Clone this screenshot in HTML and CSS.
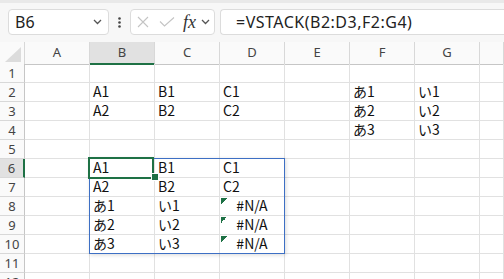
FILE: index.html
```html
<!DOCTYPE html>
<html lang="ja">
<head>
  <meta charset="UTF-8">
  <title>VSTACK</title>
  <link rel="stylesheet" href="styles.css">
</head>
<body>
  <div class="toolbar">
    <div class="namebox">
      <span>B6</span>
      <svg class="chev" width="9" height="6" viewBox="0 0 9 6"><polyline points="1,1 4.5,4.5 8,1" fill="none" stroke="#555" stroke-width="1.3"/></svg>
    </div>
    <div class="dots">
      <svg width="3" height="11" viewBox="0 0 3 11"><circle cx="1.5" cy="1.5" r="1.3" fill="#444"/><circle cx="1.5" cy="5.5" r="1.3" fill="#444"/><circle cx="1.5" cy="9.5" r="1.3" fill="#444"/></svg>
    </div>
    <div class="fbuttons">
      <svg class="cancel" width="12" height="12" viewBox="0 0 12 12"><path d="M1 1L11 11M11 1L1 11" stroke="#c4c4c4" stroke-width="1.1" fill="none"/></svg>
      <svg class="enter" width="16" height="10" viewBox="0 0 16 10"><polyline points="1,4.5 5.5,9 15,0.5" fill="none" stroke="#c4c4c4" stroke-width="1.1"/></svg>
      <span class="fx">fx</span>
      <svg class="chev" width="9" height="6" viewBox="0 0 9 6"><polyline points="1,1 4.5,4.5 8,1" fill="none" stroke="#555" stroke-width="1.3"/></svg>
    </div>
    <div class="formula">=VSTACK(B2:D3,F2:G4)</div>
  </div>

  <div class="sheet">
    <div class="row head">
      <div class="corner">
        <svg width="24" height="21" viewBox="0 0 24 21"><polygon points="21,5 21,20 5,20" fill="#dcdcdc"/></svg>
      </div>
      <div class="col">A</div><div class="col sel">B</div><div class="col">C</div><div class="col">D</div>
      <div class="col">E</div><div class="col">F</div><div class="col">G</div><div class="col"></div>
    </div>
    <div class="row"><div class="num">1</div><div></div><div></div><div></div><div></div><div></div><div></div><div></div><div></div></div>
    <div class="row"><div class="num">2</div><div></div><div>A1</div><div>B1</div><div>C1</div><div></div><div>あ1</div><div>い1</div><div></div></div>
    <div class="row"><div class="num">3</div><div></div><div>A2</div><div>B2</div><div>C2</div><div></div><div>あ2</div><div>い2</div><div></div></div>
    <div class="row"><div class="num">4</div><div></div><div></div><div></div><div></div><div></div><div>あ3</div><div>い3</div><div></div></div>
    <div class="row"><div class="num">5</div><div></div><div></div><div></div><div></div><div></div><div></div><div></div><div></div></div>
    <div class="row"><div class="num sel">6</div><div></div><div>A1</div><div>B1</div><div>C1</div><div></div><div></div><div></div><div></div></div>
    <div class="row"><div class="num">7</div><div></div><div>A2</div><div>B2</div><div>C2</div><div></div><div></div><div></div><div></div></div>
    <div class="row"><div class="num">8</div><div></div><div>あ1</div><div>い1</div><div class="err">#N/A</div><div></div><div></div><div></div><div></div></div>
    <div class="row"><div class="num">9</div><div></div><div>あ2</div><div>い2</div><div class="err">#N/A</div><div></div><div></div><div></div><div></div></div>
    <div class="row"><div class="num">10</div><div></div><div>あ3</div><div>い3</div><div class="err">#N/A</div><div></div><div></div><div></div><div></div></div>
    <div class="row"><div class="num">11</div><div></div><div></div><div></div><div></div><div></div><div></div><div></div><div></div></div>
    <div class="row"><div class="num">12</div><div></div><div></div><div></div><div></div><div></div><div></div><div></div><div></div></div>

    <!-- spill range and active cell drawn over the grid -->
    <div class="spill"></div>
    <div class="active"></div>
    <div class="handle"></div>
  </div>
</body>
</html>
```

FILE: styles.css
```css
html, body {
  margin: 0;
  height: 279px;
  overflow: hidden;
  background: #fff;
}

.toolbar {
  border-top: 3px solid #e9e9e9;
  background: #f7f7f7;
  display: flex;
  align-items: flex-start;
  padding: 6px 0 0 8px;
  box-sizing: border-box;
  height: 42px;
  font-family: "Noto Sans", "Open Sans", sans-serif;
  color: #222;
}

.namebox,
.fbuttons,
.formula {
  height: 26px;
  box-sizing: border-box;
  background: #fff;
  border: 1px solid #dcdcdc;
  border-radius: 4px;
  display: flex;
  align-items: center;
}

.namebox {
  width: 101px;
  padding: 0 6px 0 6px;
  font-size: 16px;
  justify-content: space-between;
}

.dots {
  width: 21px;
  height: 26px;
  display: flex;
  align-items: center;
  justify-content: center;
}

.fbuttons {
  width: 85px;
  padding-left: 6px;
}

.fbuttons .enter { margin-left: 10px; }

.fx {
  margin-left: 8px;
  font-family: "Liberation Serif", serif;
  font-style: italic;
  font-size: 18px;
  color: #333;
  line-height: 20px;
}

.fbuttons .chev { margin-left: 5px; }

.formula {
  margin-left: 5px;
  flex: 1;
  border-right: none;
  border-radius: 4px 0 0 4px;
  padding-left: 15px;
  font-size: 16px;
  letter-spacing: 0.5px;
}

/* grid */
.sheet {
  position: relative;
  font-family: "Noto Sans CJK JP", sans-serif;
  font-size: 14px;
  color: #111;
}

.row {
  display: grid;
  grid-template-columns: 25px repeat(7, 65px) 1fr;
  height: 19px;
}

.row > div {
  box-sizing: border-box;
  border-right: 1px solid #e1e1e1;
  border-bottom: 1px solid #e1e1e1;
  padding-left: 3px;
  line-height: 16px;
  white-space: nowrap;
}

.row.head {
  height: 22px;
}

.row.head > div {
  background: #fafafa;
  border-right-color: #d8d8d8;
  border-bottom-color: #c6c6c6;
  text-align: center;
  padding: 0;
  line-height: 21px;
  font-family: "Noto Sans", sans-serif;
  font-size: 13px;
  color: #444;
}

.row.head > .col.sel {
  background: #e1e1e1;
  border-bottom: 2px solid #1e7145;
}

.row > .corner {
  border-right-color: #c6c6c6;
}

.corner svg { display: block; }

.row > .num {
  background: #fafafa;
  border-right-color: #c6c6c6;
  border-bottom-color: #d8d8d8;
  text-align: center;
  padding: 0;
  line-height: 18px;
  font-family: "Noto Sans", sans-serif;
  font-size: 13px;
  color: #444;
}

.row > .num.sel {
  background: #e1e1e1;
  border-right: 2px solid #1e7145;
}

.row > .err {
  text-align: center;
  padding: 0;
  background: linear-gradient(135deg, #1e7145 50%, transparent 50%) no-repeat 1px 1px;
  background-size: 6px 6px;
}

.spill {
  position: absolute;
  left: 89px;
  top: 116px;
  width: 196px;
  height: 96px;
  box-sizing: border-box;
  border: 1px solid #3d6fc4;
  box-shadow: 1px 1px 4px rgba(0,0,0,0.15);
}

.active {
  position: absolute;
  left: 88px;
  top: 115px;
  width: 66px;
  height: 22px;
  box-sizing: border-box;
  border: 2px solid #1e7145;
}

.handle {
  position: absolute;
  left: 152px;
  top: 132px;
  width: 6px;
  height: 6px;
  background: #1e7145;
  box-shadow: 0 0 0 1px #fff;
}
```
